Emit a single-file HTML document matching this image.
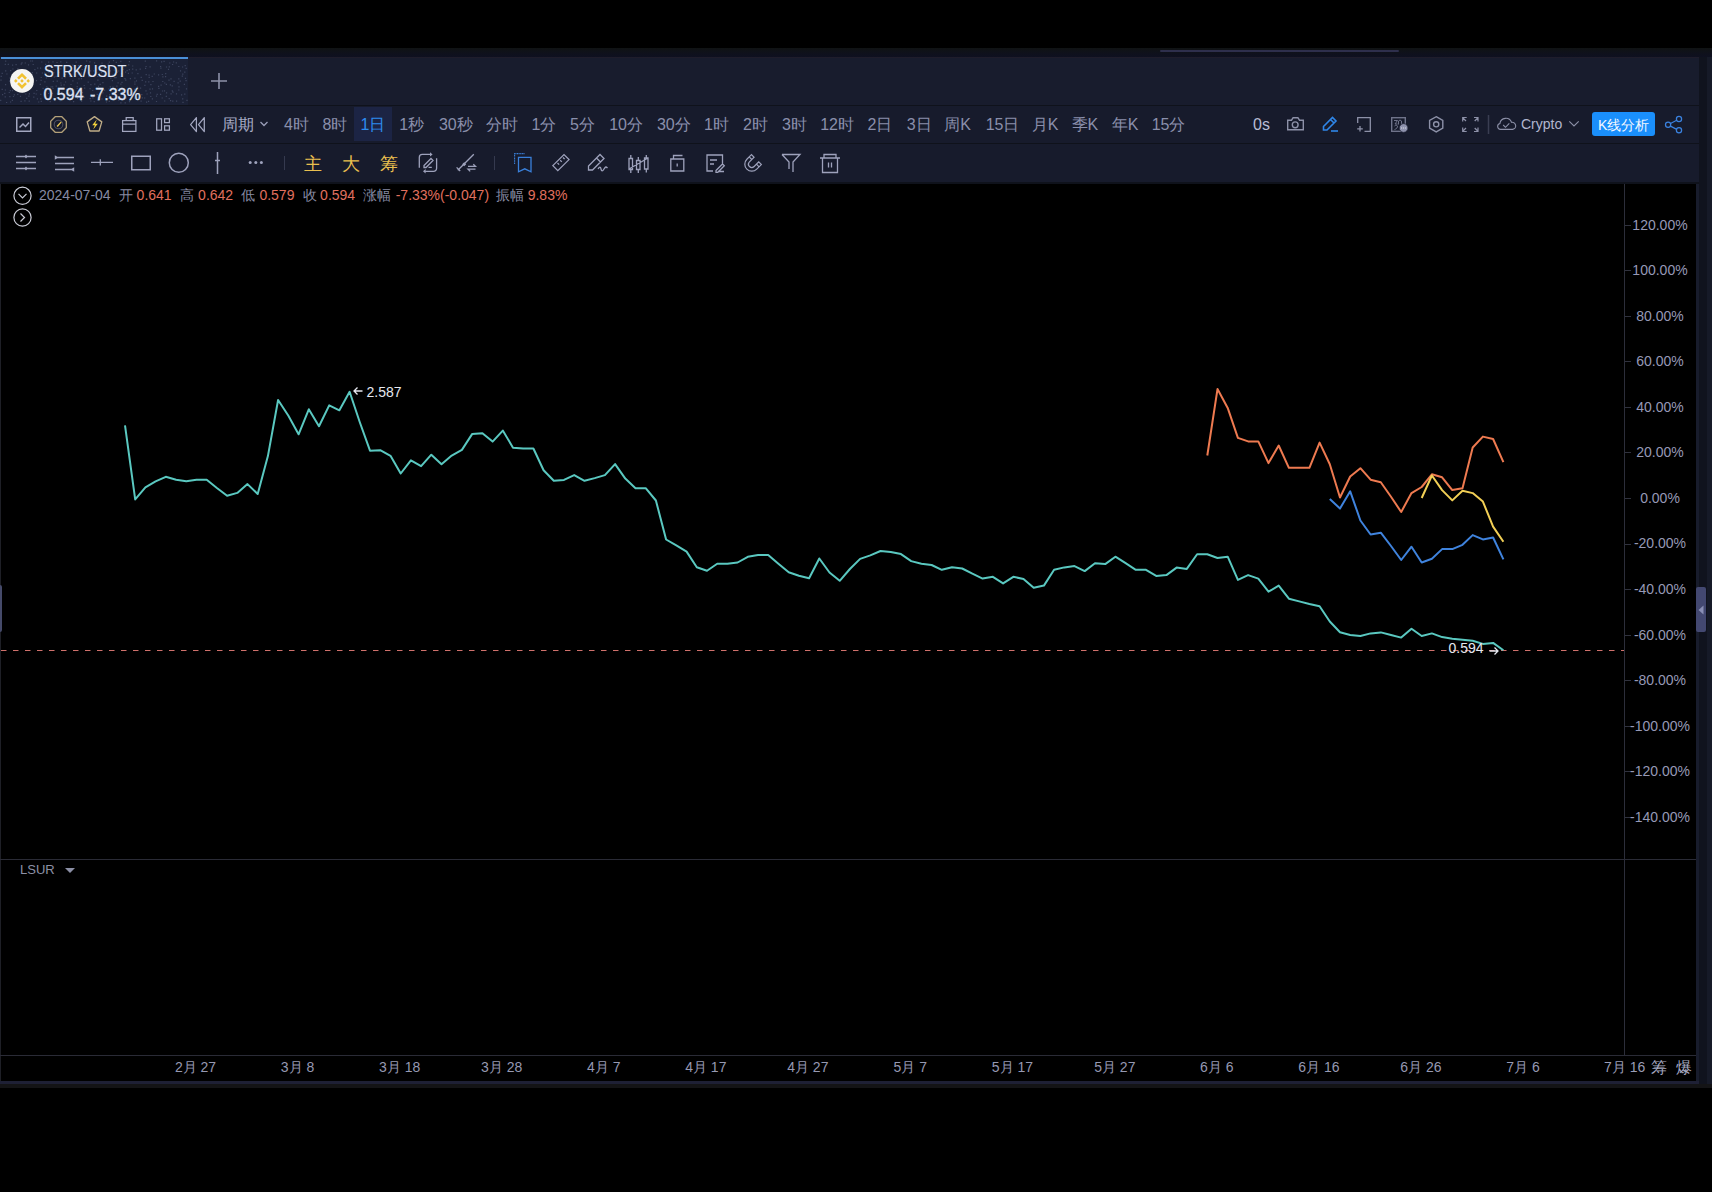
<!DOCTYPE html>
<html><head><meta charset="utf-8">
<style>
*{margin:0;padding:0;box-sizing:border-box}
html,body{width:1712px;height:1192px;overflow:hidden;background:#000;font-family:"Liberation Sans",sans-serif}
.a{position:absolute}
.t{position:absolute;white-space:nowrap;line-height:1}
#band{left:0;top:48px;width:1712px;height:9px;background:linear-gradient(#101314,#0f111c 60%,#0e1020)}
#tabbar{left:0;top:57px;width:1699px;height:48px;background:#181c2d}
#tab{left:0;top:57px;width:188px;height:48px;background-color:#1b2136}
#tabline{left:1px;top:57px;width:187px;height:2px;background:#4a8fd8}
#sep1{left:0;top:105px;width:1699px;height:1px;background:#0f121b}
#row1{left:0;top:106px;width:1699px;height:37px;background:#171b2c}
#sep2{left:0;top:143px;width:1699px;height:1px;background:#0f121b}
#row2{left:0;top:144px;width:1699px;height:38px;background:#171b2c}
#sep3{left:0;top:182px;width:1699px;height:2px;background:#0f121b}
#strip1{left:1699px;top:57px;width:8px;height:1026.5px;background:#10131e}
#strip2{left:1707px;top:57px;width:5px;height:1026.5px;background:#161a28}
#chart{left:0;top:184px;width:1696px;height:897px;background:#000}
#lborder{left:0;top:184px;width:1px;height:897px;background:#1e1f26}
#rnav{left:1696px;top:184px;width:3px;height:898px;background:#181c2c}
#bline{left:0;top:1081px;width:1699px;height:2.5px;background:#1e2035}
#gband{left:0;top:1083.5px;width:1712px;height:4.5px;background:#141416}
.per{position:absolute;top:117px;font-size:16px;color:#8a8fab;line-height:16px;white-space:nowrap}
.ylab{position:absolute;left:1620px;font-size:14px;color:#9699b6;line-height:14px;width:80px;text-align:center;white-space:nowrap}
.xlab{position:absolute;top:1060px;font-size:14px;color:#9699b2;line-height:14px;white-space:nowrap;transform:translateX(-50%)}
.tick{position:absolute;left:1625px;width:6px;height:1px;background:#30323e}
.g{color:#868aa3}.r{color:#e0705f}
</style></head><body>
<div class="a" id="band"></div>
<div class="a" style="left:1160px;top:50px;width:239px;height:2px;background:#2e2f4c;border-radius:1px"></div>
<div class="a" id="tabbar"></div>
<div class="a" style="left:188px;top:57px;width:1511px;height:1px;background:#1f1d2b"></div>
<div class="a" id="tab"></div>
<div class="a" id="tabline"></div>
<svg class="a" style="left:0;top:59px" width="188" height="46" viewBox="0 0 188 46"><path d="M5.1 1.6h1.2v1.2h-1.2zM21.4 3.3h1.2v1.2h-1.2zM24.7 3.4h1.2v1.2h-1.2zM30.1 1.4h1.2v1.2h-1.2zM31.9 1.4h1.2v1.2h-1.2zM41.2 2.4h1.2v1.2h-1.2zM48.1 2.5h1.2v1.2h-1.2zM52.4 2.3h1.2v1.2h-1.2zM56.4 2.9h1.2v1.2h-1.2zM60.2 2.2h1.2v1.2h-1.2zM66.1 2.7h1.2v1.2h-1.2zM75.6 2.5h1.2v1.2h-1.2zM86.1 1.4h1.2v1.2h-1.2zM89.3 2.2h1.2v1.2h-1.2zM94.0 3.3h1.2v1.2h-1.2zM101.4 3.5h1.2v1.2h-1.2zM108.7 2.5h1.2v1.2h-1.2zM112.9 1.0h1.2v1.2h-1.2zM115.7 2.8h1.2v1.2h-1.2zM120.2 1.7h1.2v1.2h-1.2zM128.8 2.1h1.2v1.2h-1.2zM144.7 1.6h1.2v1.2h-1.2zM156.0 1.2h1.2v1.2h-1.2zM161.0 2.3h1.2v1.2h-1.2zM163.5 1.8h1.2v1.2h-1.2zM169.2 3.4h1.2v1.2h-1.2zM173.0 2.4h1.2v1.2h-1.2zM175.7 3.2h1.2v1.2h-1.2zM4.7 4.8h1.2v1.2h-1.2zM7.7 4.7h1.2v1.2h-1.2zM12.0 5.5h1.2v1.2h-1.2zM15.5 5.0h1.2v1.2h-1.2zM20.6 4.6h1.2v1.2h-1.2zM27.9 5.3h1.2v1.2h-1.2zM32.6 4.9h1.2v1.2h-1.2zM45.0 4.8h1.2v1.2h-1.2zM48.5 5.3h1.2v1.2h-1.2zM55.6 7.4h1.2v1.2h-1.2zM59.9 6.1h1.2v1.2h-1.2zM65.1 7.4h1.2v1.2h-1.2zM72.3 5.6h1.2v1.2h-1.2zM77.8 6.1h1.2v1.2h-1.2zM84.2 6.9h1.2v1.2h-1.2zM104.2 6.1h1.2v1.2h-1.2zM107.6 4.6h1.2v1.2h-1.2zM112.3 6.6h1.2v1.2h-1.2zM122.3 7.5h1.2v1.2h-1.2zM128.2 5.2h1.2v1.2h-1.2zM132.1 6.4h1.2v1.2h-1.2zM145.5 6.9h1.2v1.2h-1.2zM149.5 7.2h1.2v1.2h-1.2zM160.0 6.9h1.2v1.2h-1.2zM165.9 7.4h1.2v1.2h-1.2zM168.7 7.3h1.2v1.2h-1.2zM172.0 4.9h1.2v1.2h-1.2zM178.2 6.9h1.2v1.2h-1.2zM182.0 7.4h1.2v1.2h-1.2zM184.6 6.1h1.2v1.2h-1.2zM5.1 11.3h1.2v1.2h-1.2zM10.1 11.0h1.2v1.2h-1.2zM12.3 9.4h1.2v1.2h-1.2zM17.3 9.3h1.2v1.2h-1.2zM19.9 11.2h1.2v1.2h-1.2zM24.9 10.3h1.2v1.2h-1.2zM34.3 10.0h1.2v1.2h-1.2zM37.1 8.6h1.2v1.2h-1.2zM40.0 8.5h1.2v1.2h-1.2zM48.9 10.7h1.2v1.2h-1.2zM52.5 10.1h1.2v1.2h-1.2zM57.9 8.8h1.2v1.2h-1.2zM60.2 9.3h1.2v1.2h-1.2zM69.2 10.8h1.2v1.2h-1.2zM77.3 10.0h1.2v1.2h-1.2zM81.6 9.9h1.2v1.2h-1.2zM84.9 11.3h1.2v1.2h-1.2zM90.1 11.3h1.2v1.2h-1.2zM93.2 11.3h1.2v1.2h-1.2zM99.9 9.8h1.2v1.2h-1.2zM104.2 8.7h1.2v1.2h-1.2zM109.9 11.2h1.2v1.2h-1.2zM113.6 10.5h1.2v1.2h-1.2zM118.1 11.4h1.2v1.2h-1.2zM122.4 9.7h1.2v1.2h-1.2zM126.5 11.0h1.2v1.2h-1.2zM128.8 10.0h1.2v1.2h-1.2zM132.1 9.5h1.2v1.2h-1.2zM135.6 10.2h1.2v1.2h-1.2zM139.6 9.5h1.2v1.2h-1.2zM145.0 8.7h1.2v1.2h-1.2zM160.3 8.6h1.2v1.2h-1.2zM167.9 9.8h1.2v1.2h-1.2zM179.9 11.3h1.2v1.2h-1.2zM185.6 8.8h1.2v1.2h-1.2zM1.6 13.8h1.2v1.2h-1.2zM6.3 14.4h1.2v1.2h-1.2zM14.1 12.7h1.2v1.2h-1.2zM20.5 14.2h1.2v1.2h-1.2zM27.9 14.1h1.2v1.2h-1.2zM31.8 13.0h1.2v1.2h-1.2zM36.1 13.4h1.2v1.2h-1.2zM41.8 13.4h1.2v1.2h-1.2zM44.0 13.5h1.2v1.2h-1.2zM48.3 12.5h1.2v1.2h-1.2zM53.2 13.1h1.2v1.2h-1.2zM58.3 12.8h1.2v1.2h-1.2zM65.0 15.0h1.2v1.2h-1.2zM69.0 14.6h1.2v1.2h-1.2zM78.0 14.6h1.2v1.2h-1.2zM80.7 13.5h1.2v1.2h-1.2zM83.9 12.7h1.2v1.2h-1.2zM88.3 13.0h1.2v1.2h-1.2zM94.0 15.1h1.2v1.2h-1.2zM96.3 13.2h1.2v1.2h-1.2zM100.9 13.0h1.2v1.2h-1.2zM104.3 15.4h1.2v1.2h-1.2zM112.2 15.4h1.2v1.2h-1.2zM116.6 12.5h1.2v1.2h-1.2zM120.9 14.0h1.2v1.2h-1.2zM125.0 12.5h1.2v1.2h-1.2zM127.8 13.7h1.2v1.2h-1.2zM131.6 13.4h1.2v1.2h-1.2zM137.3 14.1h1.2v1.2h-1.2zM145.6 15.1h1.2v1.2h-1.2zM148.5 15.5h1.2v1.2h-1.2zM153.7 14.4h1.2v1.2h-1.2zM158.0 15.2h1.2v1.2h-1.2zM161.7 14.9h1.2v1.2h-1.2zM165.1 14.0h1.2v1.2h-1.2zM182.2 14.5h1.2v1.2h-1.2zM184.2 12.6h1.2v1.2h-1.2zM0.6 16.8h1.2v1.2h-1.2zM9.4 18.4h1.2v1.2h-1.2zM13.0 16.5h1.2v1.2h-1.2zM21.0 18.1h1.2v1.2h-1.2zM23.7 18.7h1.2v1.2h-1.2zM27.7 17.3h1.2v1.2h-1.2zM32.1 18.7h1.2v1.2h-1.2zM40.6 17.9h1.2v1.2h-1.2zM45.8 18.4h1.2v1.2h-1.2zM47.7 16.9h1.2v1.2h-1.2zM53.7 17.4h1.2v1.2h-1.2zM55.5 16.7h1.2v1.2h-1.2zM61.5 18.6h1.2v1.2h-1.2zM64.4 18.0h1.2v1.2h-1.2zM68.9 16.9h1.2v1.2h-1.2zM78.4 19.3h1.2v1.2h-1.2zM80.9 19.0h1.2v1.2h-1.2zM88.3 17.1h1.2v1.2h-1.2zM97.2 16.9h1.2v1.2h-1.2zM102.4 16.9h1.2v1.2h-1.2zM110.2 18.6h1.2v1.2h-1.2zM114.2 18.0h1.2v1.2h-1.2zM115.5 18.0h1.2v1.2h-1.2zM120.4 16.9h1.2v1.2h-1.2zM124.4 19.0h1.2v1.2h-1.2zM129.8 19.0h1.2v1.2h-1.2zM134.3 18.6h1.2v1.2h-1.2zM140.6 17.7h1.2v1.2h-1.2zM148.6 17.8h1.2v1.2h-1.2zM151.6 16.8h1.2v1.2h-1.2zM162.3 17.2h1.2v1.2h-1.2zM165.0 17.1h1.2v1.2h-1.2zM170.4 19.2h1.2v1.2h-1.2zM178.2 19.3h1.2v1.2h-1.2zM181.7 16.6h1.2v1.2h-1.2zM184.9 18.8h1.2v1.2h-1.2zM0.4 20.6h1.2v1.2h-1.2zM8.9 21.5h1.2v1.2h-1.2zM13.7 23.4h1.2v1.2h-1.2zM17.5 21.4h1.2v1.2h-1.2zM20.7 21.0h1.2v1.2h-1.2zM24.1 23.2h1.2v1.2h-1.2zM28.2 23.2h1.2v1.2h-1.2zM35.9 21.1h1.2v1.2h-1.2zM40.5 20.8h1.2v1.2h-1.2zM44.3 22.2h1.2v1.2h-1.2zM52.7 21.7h1.2v1.2h-1.2zM56.6 21.5h1.2v1.2h-1.2zM60.3 23.4h1.2v1.2h-1.2zM65.0 22.4h1.2v1.2h-1.2zM72.3 21.2h1.2v1.2h-1.2zM76.8 23.4h1.2v1.2h-1.2zM87.6 22.6h1.2v1.2h-1.2zM97.3 20.5h1.2v1.2h-1.2zM102.3 23.0h1.2v1.2h-1.2zM111.8 21.0h1.2v1.2h-1.2zM117.5 23.3h1.2v1.2h-1.2zM121.4 22.8h1.2v1.2h-1.2zM125.2 20.6h1.2v1.2h-1.2zM134.3 22.4h1.2v1.2h-1.2zM135.9 21.3h1.2v1.2h-1.2zM141.6 20.8h1.2v1.2h-1.2zM145.1 22.2h1.2v1.2h-1.2zM148.2 22.3h1.2v1.2h-1.2zM152.4 21.9h1.2v1.2h-1.2zM162.2 21.9h1.2v1.2h-1.2zM164.2 23.4h1.2v1.2h-1.2zM168.4 20.6h1.2v1.2h-1.2zM173.5 21.8h1.2v1.2h-1.2zM177.5 23.3h1.2v1.2h-1.2zM179.6 21.5h1.2v1.2h-1.2zM185.5 21.1h1.2v1.2h-1.2zM5.0 25.1h1.2v1.2h-1.2zM14.0 25.2h1.2v1.2h-1.2zM17.8 25.4h1.2v1.2h-1.2zM24.1 25.2h1.2v1.2h-1.2zM29.5 27.3h1.2v1.2h-1.2zM32.7 25.1h1.2v1.2h-1.2zM39.7 24.7h1.2v1.2h-1.2zM46.2 27.2h1.2v1.2h-1.2zM50.5 27.3h1.2v1.2h-1.2zM52.1 27.3h1.2v1.2h-1.2zM55.6 26.5h1.2v1.2h-1.2zM60.6 25.5h1.2v1.2h-1.2zM63.5 25.3h1.2v1.2h-1.2zM70.4 24.9h1.2v1.2h-1.2zM76.6 27.0h1.2v1.2h-1.2zM83.6 25.9h1.2v1.2h-1.2zM90.3 25.1h1.2v1.2h-1.2zM94.2 24.6h1.2v1.2h-1.2zM97.9 26.8h1.2v1.2h-1.2zM99.6 24.7h1.2v1.2h-1.2zM109.7 27.2h1.2v1.2h-1.2zM112.3 27.4h1.2v1.2h-1.2zM116.3 26.6h1.2v1.2h-1.2zM120.3 24.5h1.2v1.2h-1.2zM134.3 24.6h1.2v1.2h-1.2zM136.9 27.4h1.2v1.2h-1.2zM144.3 25.8h1.2v1.2h-1.2zM150.3 25.0h1.2v1.2h-1.2zM158.0 26.8h1.2v1.2h-1.2zM160.5 25.5h1.2v1.2h-1.2zM165.8 24.7h1.2v1.2h-1.2zM169.8 25.2h1.2v1.2h-1.2zM171.6 26.2h1.2v1.2h-1.2zM178.4 27.2h1.2v1.2h-1.2zM183.8 24.8h1.2v1.2h-1.2zM1.6 29.8h1.2v1.2h-1.2zM4.8 30.4h1.2v1.2h-1.2zM9.7 31.0h1.2v1.2h-1.2zM11.9 31.0h1.2v1.2h-1.2zM17.2 29.6h1.2v1.2h-1.2zM20.1 29.2h1.2v1.2h-1.2zM24.0 31.2h1.2v1.2h-1.2zM28.5 29.7h1.2v1.2h-1.2zM36.2 30.9h1.2v1.2h-1.2zM42.5 28.8h1.2v1.2h-1.2zM46.0 31.0h1.2v1.2h-1.2zM52.4 28.9h1.2v1.2h-1.2zM58.4 30.2h1.2v1.2h-1.2zM66.1 29.8h1.2v1.2h-1.2zM69.8 31.3h1.2v1.2h-1.2zM73.3 30.4h1.2v1.2h-1.2zM76.6 28.9h1.2v1.2h-1.2zM80.3 30.3h1.2v1.2h-1.2zM84.1 28.5h1.2v1.2h-1.2zM89.5 29.1h1.2v1.2h-1.2zM92.1 30.9h1.2v1.2h-1.2zM95.7 28.8h1.2v1.2h-1.2zM101.2 30.4h1.2v1.2h-1.2zM104.0 30.6h1.2v1.2h-1.2zM108.3 29.4h1.2v1.2h-1.2zM117.2 29.6h1.2v1.2h-1.2zM122.1 31.5h1.2v1.2h-1.2zM124.1 30.7h1.2v1.2h-1.2zM127.5 31.2h1.2v1.2h-1.2zM134.0 29.7h1.2v1.2h-1.2zM140.0 28.5h1.2v1.2h-1.2zM145.4 31.2h1.2v1.2h-1.2zM149.4 29.6h1.2v1.2h-1.2zM151.9 29.3h1.2v1.2h-1.2zM158.3 28.8h1.2v1.2h-1.2zM161.9 31.4h1.2v1.2h-1.2zM163.9 31.3h1.2v1.2h-1.2zM171.7 31.3h1.2v1.2h-1.2zM178.2 30.4h1.2v1.2h-1.2zM185.9 29.2h1.2v1.2h-1.2zM2.0 35.0h1.2v1.2h-1.2zM4.2 33.7h1.2v1.2h-1.2zM8.7 32.9h1.2v1.2h-1.2zM13.7 35.2h1.2v1.2h-1.2zM17.2 34.8h1.2v1.2h-1.2zM22.0 32.9h1.2v1.2h-1.2zM25.2 34.4h1.2v1.2h-1.2zM28.8 34.2h1.2v1.2h-1.2zM33.5 33.8h1.2v1.2h-1.2zM35.6 34.4h1.2v1.2h-1.2zM40.2 34.8h1.2v1.2h-1.2zM48.0 33.9h1.2v1.2h-1.2zM51.9 33.8h1.2v1.2h-1.2zM56.8 34.0h1.2v1.2h-1.2zM61.4 32.7h1.2v1.2h-1.2zM65.8 34.0h1.2v1.2h-1.2zM69.0 33.6h1.2v1.2h-1.2zM78.1 35.5h1.2v1.2h-1.2zM81.9 33.1h1.2v1.2h-1.2zM90.4 35.2h1.2v1.2h-1.2zM93.9 35.3h1.2v1.2h-1.2zM96.6 34.8h1.2v1.2h-1.2zM102.2 33.3h1.2v1.2h-1.2zM109.0 35.3h1.2v1.2h-1.2zM112.3 34.0h1.2v1.2h-1.2zM115.6 33.0h1.2v1.2h-1.2zM122.3 34.5h1.2v1.2h-1.2zM129.9 32.8h1.2v1.2h-1.2zM133.4 33.6h1.2v1.2h-1.2zM141.2 35.1h1.2v1.2h-1.2zM146.5 34.4h1.2v1.2h-1.2zM149.9 33.3h1.2v1.2h-1.2zM156.6 34.8h1.2v1.2h-1.2zM160.0 34.7h1.2v1.2h-1.2zM166.0 33.3h1.2v1.2h-1.2zM170.5 34.3h1.2v1.2h-1.2zM172.4 32.5h1.2v1.2h-1.2zM175.9 34.3h1.2v1.2h-1.2zM181.0 35.2h1.2v1.2h-1.2zM184.2 34.5h1.2v1.2h-1.2zM4.6 37.2h1.2v1.2h-1.2zM9.3 37.1h1.2v1.2h-1.2zM12.9 36.9h1.2v1.2h-1.2zM19.9 36.8h1.2v1.2h-1.2zM26.1 38.8h1.2v1.2h-1.2zM28.3 36.5h1.2v1.2h-1.2zM33.2 37.6h1.2v1.2h-1.2zM36.8 39.3h1.2v1.2h-1.2zM40.2 39.2h1.2v1.2h-1.2zM45.1 37.7h1.2v1.2h-1.2zM47.7 38.8h1.2v1.2h-1.2zM53.2 39.3h1.2v1.2h-1.2zM56.1 38.3h1.2v1.2h-1.2zM61.4 38.9h1.2v1.2h-1.2zM64.4 37.4h1.2v1.2h-1.2zM70.2 38.8h1.2v1.2h-1.2zM71.5 39.0h1.2v1.2h-1.2zM76.9 38.7h1.2v1.2h-1.2zM80.2 36.8h1.2v1.2h-1.2zM83.6 37.5h1.2v1.2h-1.2zM89.6 39.0h1.2v1.2h-1.2zM92.3 38.2h1.2v1.2h-1.2zM97.9 38.1h1.2v1.2h-1.2zM101.4 39.4h1.2v1.2h-1.2zM106.1 36.5h1.2v1.2h-1.2zM108.2 38.7h1.2v1.2h-1.2zM116.5 39.1h1.2v1.2h-1.2zM120.2 39.2h1.2v1.2h-1.2zM125.6 38.5h1.2v1.2h-1.2zM134.0 38.6h1.2v1.2h-1.2zM141.7 38.2h1.2v1.2h-1.2zM144.1 38.4h1.2v1.2h-1.2zM150.2 36.9h1.2v1.2h-1.2zM151.8 39.3h1.2v1.2h-1.2zM155.9 36.6h1.2v1.2h-1.2zM161.6 38.4h1.2v1.2h-1.2zM165.7 36.7h1.2v1.2h-1.2zM168.6 39.0h1.2v1.2h-1.2zM182.1 39.2h1.2v1.2h-1.2zM0.1 40.8h1.2v1.2h-1.2zM6.0 42.9h1.2v1.2h-1.2zM10.0 42.4h1.2v1.2h-1.2zM11.8 40.8h1.2v1.2h-1.2zM20.5 41.8h1.2v1.2h-1.2zM24.3 41.3h1.2v1.2h-1.2zM28.6 41.5h1.2v1.2h-1.2zM38.1 42.4h1.2v1.2h-1.2zM40.7 41.8h1.2v1.2h-1.2zM49.6 42.1h1.2v1.2h-1.2zM54.1 40.8h1.2v1.2h-1.2zM59.5 41.1h1.2v1.2h-1.2zM73.0 42.0h1.2v1.2h-1.2zM81.0 41.5h1.2v1.2h-1.2zM90.3 41.4h1.2v1.2h-1.2zM93.6 42.0h1.2v1.2h-1.2zM97.4 40.7h1.2v1.2h-1.2zM105.9 42.4h1.2v1.2h-1.2zM108.7 41.7h1.2v1.2h-1.2zM118.2 40.6h1.2v1.2h-1.2zM120.3 43.2h1.2v1.2h-1.2zM124.6 43.2h1.2v1.2h-1.2zM128.9 42.1h1.2v1.2h-1.2zM140.5 41.5h1.2v1.2h-1.2zM146.0 42.5h1.2v1.2h-1.2zM148.0 41.8h1.2v1.2h-1.2zM155.9 41.9h1.2v1.2h-1.2zM164.1 41.4h1.2v1.2h-1.2zM170.0 41.0h1.2v1.2h-1.2zM172.2 41.5h1.2v1.2h-1.2zM176.0 41.5h1.2v1.2h-1.2zM182.4 42.7h1.2v1.2h-1.2zM186.4 40.8h1.2v1.2h-1.2z" fill="#59627f" fill-opacity="0.55"/></svg>
<div class="a" id="sep1"></div>
<div class="a" id="row1"></div>
<div class="a" id="sep2"></div>
<div class="a" id="row2"></div>
<div class="a" id="sep3"></div>
<div class="a" id="strip1"></div>
<div class="a" id="strip2"></div>
<div class="a" id="chart"></div>
<div class="a" id="lborder"></div>
<div class="a" id="rnav"></div>
<div class="a" id="bline"></div>
<div class="a" id="gband"></div>

<!-- tab content -->
<svg class="a" style="left:10px;top:69px" width="24" height="24" viewBox="10 69 24 24">
 <circle cx="22" cy="80.9" r="11.9" fill="#f5f5f3"/>
 <g fill="#f1c232" transform="translate(14 72.9) scale(0.1264)">
 <path d="M38.73 53.2l24.59-24.58 24.6 24.6 14.3-14.31L63.32 0 24.43 38.9l14.3 14.3z M0 63.31l14.3-14.31 14.31 14.31-14.31 14.3z M38.73 73.41l24.59 24.59 24.6-24.6 14.31 14.29-38.9 38.91-38.91-38.88-.02-.02 14.33-14.29z M98 63.31l14.3-14.31 14.31 14.3-14.31 14.32z M77.83 63.3L63.32 48.78 48.81 63.3l14.51 14.52z"/>
 </g>
</svg>
<div class="t" style="left:44px;top:64px;font-size:16px;color:#dde2f4;transform:scaleX(0.91);transform-origin:0 0;-webkit-text-stroke:0.15px #dde2f4">STRK/USDT</div>
<div class="t" style="left:43.5px;top:87px;font-size:16px;color:#dde2f4;-webkit-text-stroke:0.3px #dde2f4;word-spacing:2px">0.594 -7.33%</div>
<svg class="a" style="left:211px;top:73px" width="16" height="16" viewBox="0 0 16 16"><path d="M8 0v16M0 8h16" stroke="#8d91a8" stroke-width="1.6"/></svg>

<!-- row1 icons left -->
<svg class="a" style="left:0;top:106px" width="290" height="37" viewBox="0 106 290 37" fill="none" stroke-width="1.5">
 <rect x="16.75" y="117.75" width="14" height="13.5" stroke="#a3a7c0"/>
 <path d="M19.5 127.5l3.5-3.5 2.5 2.5 3.5-4" stroke="#a3a7c0"/>
 <path d="M55.2 116.7h6.6l4.5 4.5v6.6l-4.5 4.5h-6.6l-4.5-4.5v-6.6z" stroke="#b3a079" stroke-width="1.3"/>
 <circle cx="58.5" cy="124.5" r="4.3" stroke="#4e4f60" stroke-width="1.1"/>
 <path d="M56.6 126l4.3-4.6 0.8 0.8-4 4.9z" fill="#f2cd55" stroke="none"/>
 <path d="M94.5 116.6l7.3 5.3-2.7 9.1h-9.2l-2.7-9.1z" stroke="#c0ad87" stroke-width="1.3" stroke-linejoin="round"/>
 <path d="M96.8 119.6l-4.6 5.6h2.6l-1.6 4.4 4.6-5.8h-2.6z" fill="#f5d33c" stroke="none"/>
 <rect x="122.6" y="120.6" width="13.3" height="10.8" stroke="#a3a7c0" stroke-width="1.25"/>
 <path d="M126.2 120.5v-2.9h7v2.9M122.8 124.2h13" stroke="#a3a7c0" stroke-width="1.25"/>
 <rect x="156.7" y="118.8" width="4.8" height="11.4" stroke="#a3a7c0" stroke-width="1.25"/>
 <rect x="164.6" y="118.8" width="4.8" height="3.8" stroke="#a3a7c0" stroke-width="1.25"/>
 <rect x="164.6" y="125.8" width="4.8" height="4.4" stroke="#a3a7c0" stroke-width="1.25"/>
 <path d="M196.4 117.6l-5.8 7 5.8 7z M204.3 117.6l-5.8 7 5.8 7z" stroke="#a3a7c0" stroke-width="1.25" stroke-linejoin="round"/>
 <path d="M260.5 122l3.5 3.5 3.5-3.5" stroke="#9a9eb8" stroke-width="1.3"/>
</svg>
<div class="per" style="left:222px;top:117px;color:#a7abc6">周期</div>
<div class="a" style="left:354px;top:107px;width:38px;height:34px;background:#1c2444"></div>
<div class="per" style="left:284.0px">4时</div>
<div class="per" style="left:322.6px">8时</div>
<div class="per" style="left:360.6px;color:#2d8cf0">1日</div>
<div class="per" style="left:399.3px">1秒</div>
<div class="per" style="left:438.9px">30秒</div>
<div class="per" style="left:485.8px">分时</div>
<div class="per" style="left:531.5px">1分</div>
<div class="per" style="left:570.0px">5分</div>
<div class="per" style="left:609.2px">10分</div>
<div class="per" style="left:656.9px">30分</div>
<div class="per" style="left:704.0px">1时</div>
<div class="per" style="left:743.0px">2时</div>
<div class="per" style="left:782.0px">3时</div>
<div class="per" style="left:820.2px">12时</div>
<div class="per" style="left:867.5px">2日</div>
<div class="per" style="left:906.7px">3日</div>
<div class="per" style="left:944.2px">周K</div>
<div class="per" style="left:985.7px">15日</div>
<div class="per" style="left:1031.8px">月K</div>
<div class="per" style="left:1071.5px">季K</div>
<div class="per" style="left:1111.8px">年K</div>
<div class="per" style="left:1151.7px">15分</div>

<!-- row1 right -->
<div class="per" style="left:1253px;top:117px;color:#b9bdd6">0s</div>
<svg class="a" style="left:1280px;top:106px" width="420" height="37" viewBox="1280 106 420 37" fill="none" stroke-width="1.4">
 <path d="M1287.7 120.2h3.8l1.6-2.5h4.8l1.6 2.5h3.8v9.6h-15.6z" stroke="#8d91a8"/>
 <circle cx="1295.2" cy="124.8" r="2.9" stroke="#8d91a8"/>
 <path d="M1323.5 126.5l9-9 3.5 3.5-9 9h-3.5z M1330.5 119.5l3.5 3.5" stroke="#2f86e8" stroke-width="1.6"/>
 <path d="M1331 131h7" stroke="#2f86e8" stroke-width="1.6"/>
 <path d="M1357.7 123v-5.3h12.6v13.6h-5.8 M1357.2 128.8h5.6 M1360 126v5.6" stroke="#8d91a8" stroke-width="1.3"/>
 <rect x="1391.7" y="117.7" width="13.6" height="13.6" stroke="#6f738a"/>
 <path d="M1394 120.5h3.5l-2.5 3.5h2.5 M1398.5 124.5v-3.5l1.5-1 1.5 1v3 M1394.5 126c1-1 2.5-1 3 0s-1 3-3 3.5" stroke="#6f738a" stroke-width="1"/>
 <circle cx="1403.6" cy="128" r="4.4" fill="#8e92ad" stroke="#171b2c" stroke-width="0.8"/>
 <path d="M1401.2 128h0.9 M1403.2 128h0.9 M1405.2 128h0.9" stroke="#eef0f8" stroke-width="1.1"/>
 <path d="M1436.2 116.7l6.6 3.8v7.6l-6.6 3.8-6.6-3.8v-7.6z" stroke="#8d91a8"/>
 <circle cx="1436.2" cy="124.3" r="2.6" stroke="#8d91a8"/>
 <path d="M1462.7 121.5v-4h4 M1478 121.5v-4h-4 M1462.7 127.5v4h4 M1478 127.5v4h-4 M1463 118l3 3 M1477.7 118l-3 3 M1463 131l3-3 M1477.7 131l-3-3" stroke="#8d91a8" stroke-width="1.2"/>
 <path d="M1488.5 115v19" stroke="#3a3e52" stroke-width="1.5"/>
 <path d="M1500.5 129.4a3 3 0 0 1-.6-5.9a6 6 0 0 1 11.6-1.2a3.6 3.6 0 0 1 1.2 7.1z" stroke="#8d91a8" stroke-width="1.1"/>
 <path d="M1503.2 125l2.3 2.3 3.8-4" stroke="#8d91a8" stroke-width="1.1"/>
 <path d="M1569.3 121.3l4.7 4.7 4.7-4.7" stroke="#8d91a8" stroke-width="1.1"/>
 <circle cx="1679" cy="118.9" r="2.6" stroke="#3a82e0" stroke-width="1.25"/>
 <circle cx="1679" cy="130.2" r="2.6" stroke="#3a82e0" stroke-width="1.25"/>
 <circle cx="1668.1" cy="124.8" r="2.6" stroke="#3a82e0" stroke-width="1.25"/>
 <path d="M1670.5 123.5l6.2-3.3M1670.5 126.1l6.2 3.3" stroke="#3a82e0" stroke-width="1.2"/>
</svg>
<div class="t" style="left:1521px;top:117px;font-size:14px;color:#b2b6cf">Crypto</div>
<div class="a" style="left:1592px;top:112px;width:63px;height:24px;background:#1a8ffb;border-radius:3px"></div>
<div class="t" style="left:1598px;top:118px;font-size:14px;color:#f4f8ff">K线分析</div>

<!-- row2 -->
<svg class="a" style="left:0;top:144px" width="860" height="38" viewBox="0 144 860 38" fill="none" stroke="#9ea2bc" stroke-width="1.5">
 <path d="M16 156.5h20M16 162.5h20M16 168.5h20" stroke-width="1.3"/>
 <path d="M26 154.5l1.6 2-1.6 2-1.6-2z M26 166.5l1.6 2-1.6 2-1.6-2z" fill="#9ea2bc" stroke="none"/>
 <path d="M55.5 157.5h18.5M55 163.5h19M55 169.5h18.5" stroke-width="1.3"/>
 <path d="M54.8 155.3v4.4l3.4-2.2z M74.2 167.3v4.4l-3.4-2.2z" fill="#9ea2bc" stroke="none"/>
 <path d="M91 162.3h22 M100.3 159.2v6.2" stroke-width="1.3"/>
 <rect x="131.75" y="156.25" width="18.5" height="13.5"/>
 <circle cx="178.8" cy="162.8" r="9.5"/>
 <path d="M217.5 152v22 M215 160.5h5"/>
 <circle cx="250.2" cy="162.4" r="1.5" fill="#9ea2bc" stroke="none"/>
 <circle cx="255.8" cy="162.4" r="1.5" fill="#9ea2bc" stroke="none"/>
 <circle cx="261.4" cy="162.4" r="1.5" fill="#9ea2bc" stroke="none"/>
 <path d="M284.5 156v14" stroke="#353a4f" stroke-width="1"/>
 <path d="M419.3 167.7v-10.3a3 3 0 0 1 3-3h8.2 M436.6 158.3v10a3 3 0 0 1-3 3h-8.5 M424 167.5v-2l7-7 2 2-7 7z M428.5 167.3h3.3" stroke-width="1.3"/>
 <path d="M430 152.2l2.6 2.2-2.6 2.2z M425.6 169l-2.6 2.3 2.6 2.3z" fill="#9ea2bc" stroke="none"/>
 <path d="M457.8 170.2l16-16 M456.6 167.4l3.6 3.6 M468 166.4h7.5l-2.2-2.2 M475.5 169.2h-7.5l2.2 2.2" stroke-width="1.3"/>
 <path d="M464.2 162.2l2 2-2 2-2-2z" fill="#9ea2bc" stroke="none"/>
 <path d="M494.5 156v14" stroke="#353a4f" stroke-width="1"/>
 <path d="M514.6 164v-10.4h10.2" stroke="#3a7fd8" stroke-width="1.1" stroke-dasharray="1.1 0.5"/>
 <path d="M518.5 157.4h12.5v14.4l-6.25-3-6.25 3z" stroke="#3a80da" stroke-width="1.3"/>
 <path d="M552.8 165.6l11.2-11 5 5-11.2 11z M557.5 163l1.6 1.6 M560.2 160.3l1.6 1.6 M563 157.5l1.6 1.6" stroke-width="1.3"/>
 <path d="M588.5 170v-4l11.5-11.5 4 4-11.5 11.5z M596.5 158l4 4 M598 169c1.5-2.5 2.5-2.5 3 0s1.5 2.5 3 0 2-2.5 3.5-1" stroke-width="1.3"/>
 <path d="M629 158.5h3.5v11h-3.5z M630.8 155v3.5 M630.8 169.5v3.5 M636.5 160.5h3.5v9h-3.5z M638.3 157v3.5 M638.3 169.5v3.5 M644.5 158h3.5v11h-3.5z M646.3 155v3 M646.3 169v3.5 M629 169l19-11" stroke-width="1.3"/>
 <path d="M670.8 159h13v12h-13z M673.5 159v-3.5h9 M677.2 163.5v3" stroke-width="1.3"/>
 <path d="M722.5 164v-9h-15.5v16h6 M710 160h7 M710 164h4 M716 170.5l6.5-6.5 1.8 1.8-6.5 6.5h-1.8z M718 171.5h6" stroke-width="1.3"/>
 <path transform="translate(751.8 164.2) rotate(45)" d="M-7 -6.5V0A7 7 0 0 0 7 0V-6.5H3.3V0A3.3 3.3 0 0 1 -3.3 0V-6.5Z M-7 -3.3H-3.3 M3.3 -3.3H7" stroke-width="1.2"/>
 <path d="M782 154.5h18l-7 7.5v10 M782 154.5l7 7.5v7" stroke-width="1.3"/>
 <path d="M820 158h20 M824 158v-3.5h12v3.5 M822.5 158v14.5h15v-14.5 M828.5 162.5v5 M831.5 162.5v5" stroke-width="1.3"/>
</svg>
<div class="t" style="left:304px;top:154.5px;font-size:18px;color:#e9bf4f">主</div>
<div class="t" style="left:342px;top:154.5px;font-size:18px;color:#e9bf4f">大</div>
<div class="t" style="left:379.5px;top:154.5px;font-size:18px;color:#e9bf4f">筹</div>

<!-- chart info row -->
<svg class="a" style="left:13px;top:186px" width="20" height="42" viewBox="13 186 20 42" fill="none" stroke="#c9cbd6" stroke-width="1.2">
 <circle cx="22.5" cy="195.8" r="8.6"/>
 <path d="M18.5 193.8l4 4 4-4"/>
 <circle cx="22.5" cy="217.5" r="8.6"/>
 <path d="M20.5 213.5l4 4-4 4"/>
</svg>
<div class="t g" style="left:39.0px;top:188px;font-size:14px">2024-07-04</div>
<div class="t g" style="left:118.5px;top:188px;font-size:14px">开</div>
<div class="t r" style="left:136.6px;top:188px;font-size:14px">0.641</div>
<div class="t g" style="left:179.8px;top:188px;font-size:14px">高</div>
<div class="t r" style="left:198.1px;top:188px;font-size:14px">0.642</div>
<div class="t g" style="left:241.3px;top:188px;font-size:14px">低</div>
<div class="t r" style="left:259.4px;top:188px;font-size:14px">0.579</div>
<div class="t g" style="left:302.6px;top:188px;font-size:14px">收</div>
<div class="t r" style="left:320.1px;top:188px;font-size:14px">0.594</div>
<div class="t g" style="left:363.3px;top:188px;font-size:14px">涨幅</div>
<div class="t r" style="left:395.7px;top:188px;font-size:14px">-7.33%(-0.047)</div>
<div class="t g" style="left:496.1px;top:188px;font-size:14px">振幅</div>
<div class="t r" style="left:527.7px;top:188px;font-size:14px">9.83%</div>

<!-- axes -->
<div class="a" style="left:1624px;top:184px;width:1px;height:871px;background:#2c2e3a"></div>
<div class="a" style="left:0;top:859px;width:1696px;height:1px;background:#2a2b36"></div>
<div class="a" style="left:0;top:1055px;width:1696px;height:1px;background:#2a2b36"></div>
<div class="tick" style="top:224.7px"></div><div class="ylab" style="top:217.6px">120.00%</div>
<div class="tick" style="top:270.2px"></div><div class="ylab" style="top:263.1px">100.00%</div>
<div class="tick" style="top:315.8px"></div><div class="ylab" style="top:308.7px">80.00%</div>
<div class="tick" style="top:361.3px"></div><div class="ylab" style="top:354.2px">60.00%</div>
<div class="tick" style="top:406.9px"></div><div class="ylab" style="top:399.8px">40.00%</div>
<div class="tick" style="top:452.4px"></div><div class="ylab" style="top:445.3px">20.00%</div>
<div class="tick" style="top:498.0px"></div><div class="ylab" style="top:490.9px">0.00%</div>
<div class="tick" style="top:543.5px"></div><div class="ylab" style="top:536.4px">-20.00%</div>
<div class="tick" style="top:589.1px"></div><div class="ylab" style="top:582.0px">-40.00%</div>
<div class="tick" style="top:634.6px"></div><div class="ylab" style="top:627.5px">-60.00%</div>
<div class="tick" style="top:680.2px"></div><div class="ylab" style="top:673.1px">-80.00%</div>
<div class="tick" style="top:725.8px"></div><div class="ylab" style="top:718.6px">-100.00%</div>
<div class="tick" style="top:771.3px"></div><div class="ylab" style="top:764.2px">-120.00%</div>
<div class="tick" style="top:816.8px"></div><div class="ylab" style="top:809.7px">-140.00%</div>

<div class="xlab" style="left:195.5px">2月 27</div>
<div class="xlab" style="left:297.5px">3月 8</div>
<div class="xlab" style="left:399.6px">3月 18</div>
<div class="xlab" style="left:501.6px">3月 28</div>
<div class="xlab" style="left:603.7px">4月 7</div>
<div class="xlab" style="left:705.8px">4月 17</div>
<div class="xlab" style="left:807.8px">4月 27</div>
<div class="xlab" style="left:910.3px">5月 7</div>
<div class="xlab" style="left:1012.4px">5月 17</div>
<div class="xlab" style="left:1114.8px">5月 27</div>
<div class="xlab" style="left:1216.8px">6月 6</div>
<div class="xlab" style="left:1318.9px">6月 16</div>
<div class="xlab" style="left:1420.9px">6月 26</div>
<div class="xlab" style="left:1523px">7月 6</div>
<div class="t" style="left:1604px;top:1060px;font-size:14px;color:#9a9db6">7月 16</div>
<div class="t" style="left:1650.5px;top:1060px;font-size:16px;color:#a6a9c0">筹</div>
<div class="t" style="left:1675.5px;top:1060px;font-size:16px;color:#a6a9c0">爆</div>

<div class="t" style="left:20px;top:863px;font-size:13px;color:#8c90a6">LSUR</div>
<svg class="a" style="left:65px;top:867px" width="10" height="7" viewBox="0 0 10 7"><path d="M0 1h10l-5 5z" fill="#8c90a6"/></svg>

<!-- side handles -->
<div class="a" style="left:0;top:585px;width:2px;height:47px;background:#454a6a;border-radius:0 2px 2px 0"></div>
<div class="a" style="left:1696px;top:587px;width:10px;height:45px;background:#434871;border-radius:2px"></div>
<svg class="a" style="left:1698px;top:605px" width="6" height="10" viewBox="0 0 6 10"><path d="M5.5 0.5v9l-5-4.5z" fill="#8a8fb6"/></svg>

<!-- chart lines -->
<svg class="a" style="left:0;top:0" width="1712" height="1192" viewBox="0 0 1712 1192" fill="none" stroke-linejoin="round">
 <path d="M1 650.5H1624" stroke="#d0716c" stroke-width="1.1" stroke-dasharray="5.5 6.5"/>
 <polyline points="1207.3,455.5 1217.5,389.1 1227.7,407.9 1237.9,437.9 1248.1,441.4 1258.3,441.4 1268.5,463.1 1278.7,445.5 1288.9,467.8 1299.2,467.8 1309.4,467.8 1319.6,442.6 1329.8,464.3 1340.0,497.5 1350.2,476.5 1360.4,468.2 1370.6,479.7 1380.8,482.2 1391.0,496.8 1401.2,512.0 1411.5,493.1 1421.7,487.0 1431.9,474.3 1442.1,477.3 1452.3,490.1 1462.5,488.3 1472.7,447.5 1482.9,436.6 1493.1,439.0 1503.4,462.1" stroke="#ee7a50" stroke-width="2"/>
 <polyline points="1329.8,499.0 1340.0,508.6 1350.2,491.3 1360.4,520.5 1370.6,534.5 1380.8,532.7 1391.0,546.0 1401.2,560.0 1411.5,546.7 1421.7,562.5 1431.9,558.8 1442.1,549.1 1452.3,549.1 1462.5,544.8 1472.7,535.1 1482.9,539.4 1493.1,537.5 1503.4,559.4" stroke="#3f83dd" stroke-width="2"/>
 <polyline points="1421.7,498.0 1431.9,475.5 1442.1,490.1 1452.3,500.4 1462.5,490.7 1472.7,493.1 1482.9,501.6 1493.1,526.6 1503.4,541.8" stroke="#f2cf55" stroke-width="2"/>
 <polyline points="125.0,425.3 135.2,499.4 145.4,487.4 155.6,481.4 165.8,476.8 176.1,479.8 186.3,481.2 196.5,479.8 206.7,479.8 216.9,488.0 227.1,495.8 237.3,492.9 247.5,484.1 257.7,494.0 267.9,456.1 278.1,400.0 288.4,415.8 298.6,434.3 308.8,409.3 319.0,426.2 329.2,405.4 339.4,410.3 349.6,391.8 359.8,422.3 370.0,450.7 380.2,450.2 390.5,455.8 400.7,473.5 410.9,460.4 421.1,466.1 431.3,454.7 441.5,464.3 451.7,455.6 461.9,449.9 472.1,434.1 482.4,433.2 492.6,441.6 502.8,430.6 513.0,447.7 523.2,448.6 533.4,448.5 543.6,470.2 553.8,480.8 564.0,479.9 574.2,475.1 584.5,480.8 594.7,478.1 604.9,475.1 615.1,464.1 625.3,478.6 635.5,488.2 645.7,488.2 655.9,500.5 666.1,539.5 676.3,545.4 686.6,551.6 696.8,567.3 707.0,570.8 717.2,563.8 727.4,563.8 737.6,562.5 747.8,556.8 758.0,555.1 768.2,555.1 778.4,563.8 788.7,572.3 798.9,575.8 809.1,578.2 819.3,558.5 829.5,572.5 839.7,580.8 849.9,569.0 860.1,558.9 870.3,555.4 880.5,551.0 890.8,551.9 901.0,554.1 911.2,561.1 921.4,563.7 931.6,565.0 941.8,569.8 952.0,567.2 962.2,568.5 972.4,573.7 982.6,578.6 992.9,576.8 1003.1,583.4 1013.3,576.8 1023.5,579.0 1033.7,587.8 1043.9,585.6 1054.1,569.8 1064.3,567.4 1074.5,566.1 1084.7,571.1 1095.0,563.2 1105.2,564.1 1115.4,556.7 1125.6,563.2 1135.8,569.8 1146.0,569.8 1156.2,575.9 1166.4,575.1 1176.6,567.6 1186.8,568.9 1197.1,554.2 1207.3,554.2 1217.5,558.0 1227.7,556.7 1237.9,579.9 1248.1,575.1 1258.3,578.6 1268.5,591.7 1278.7,585.6 1288.9,598.7 1299.2,601.4 1309.4,604.0 1319.6,606.2 1329.8,621.5 1340.0,632.2 1350.2,635.0 1360.4,636.0 1370.6,633.4 1380.8,632.4 1391.0,635.0 1401.2,637.6 1411.5,628.7 1421.7,636.0 1431.9,633.4 1442.1,637.1 1452.3,638.7 1462.5,639.7 1472.7,640.8 1482.9,643.9 1493.1,642.9 1503.4,650.2" stroke="#5ac8c0" stroke-width="2"/>
</svg>
<svg class="a" style="left:353px;top:386px" width="10" height="10" viewBox="0 0 10 10" fill="none" stroke="#e6e8f0" stroke-width="1.3"><path d="M9.5 5H1 M4.5 1.5L1 5l3.5 3.5"/></svg><div class="t" style="left:366.5px;top:384.5px;font-size:14px;color:#e6e8f0">2.587</div>
<div class="t" style="left:1448.5px;top:641px;font-size:14px;color:#e6e8f0">0.594</div><svg class="a" style="left:1489px;top:646px" width="10" height="10" viewBox="0 0 10 10" fill="none" stroke="#e6e8f0" stroke-width="1.3"><path d="M0.5 5H9 M5.5 1.5L9 5l-3.5 3.5"/></svg>
</body></html>
